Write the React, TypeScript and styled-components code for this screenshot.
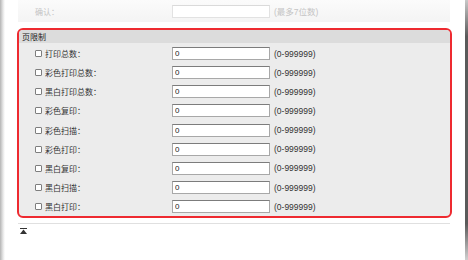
import styled, { createGlobalStyle } from 'styled-components';

const GlobalStyle = createGlobalStyle`
  html, body {
    margin: 0;
    padding: 0;
    background: #fff;
  }
  body {
    font-family: "Liberation Sans", "Noto Sans CJK SC", sans-serif;
    font-size: 8px;
    color: #333;
  }
`;

const rows = [
  '打印总数：',
  '彩色打印总数：',
  '黑白打印总数：',
  '彩色复印：',
  '彩色扫描：',
  '彩色打印：',
  '黑白复印：',
  '黑白扫描：',
  '黑白打印：',
];

function App() {
  return (
    <Frame>
      <GlobalStyle />
      <LeftShade />
      <Main>
        <TopPanel>
          <FieldLabel $muted>确认：</FieldLabel>
          <TextBox $muted readOnly value="" />
          <Hint $muted>(最多7位数)</Hint>
        </TopPanel>

        <LimitBox>
          <BoxHeader>页限制</BoxHeader>
          <RowList>
            {rows.map((label) => (
              <Row key={label}>
                <Check type="checkbox" />
                <RowLabel>{label}</RowLabel>
                <TextBox readOnly value="0" />
                <Hint>(0-999999)</Hint>
              </Row>
            ))}
          </RowList>
        </LimitBox>

        <Divider />
        <TopButton>
          <svg width="7" height="6" viewBox="0 0 7 6">
            <rect x="0" y="0" width="7" height="1" fill="#333" />
            <polygon points="3.5,1.5 7,6 0,6" fill="#333" />
          </svg>
        </TopButton>
      </Main>
      <RightShade />
    </Frame>
  );
}

const Frame = styled.div`
  display: flex;
  height: 260px;
  width: 468px;
  overflow: hidden;
`;

const LeftShade = styled.div`
  width: 5px;
  flex-shrink: 0;
  background: linear-gradient(to right, #b4b4b4, #e6e6e6 60%, #fff);
`;

const RightShade = styled.div`
  width: 3px;
  flex-shrink: 0;
  background: linear-gradient(to bottom, #c8c8c8, #5a5a5a 14%, #5a5a5a 86%, #d0d0d0);
`;

const Main = styled.div`
  flex: 1;
  display: flex;
  flex-direction: column;
  padding: 0 13px 0 12px;
`;

const TopPanel = styled.div`
  height: 22px;
  display: flex;
  align-items: center;
  margin: 0 2px 0 1px;
  padding-left: 17px;
  background: linear-gradient(to bottom, #fbfbfb, #f4f4f4);
`;

const FieldLabel = styled.span<{ $muted?: boolean }>`
  width: 137px;
  font-family: "Noto Sans CJK SC", sans-serif;
  color: ${({ $muted }) => ($muted ? '#c4c4c4' : '#333')};
`;

const TextBox = styled.input<{ $muted?: boolean }>`
  box-sizing: border-box;
  width: 98px;
  height: 13px;
  margin: 0;
  padding: 0 2px;
  font-family: "Liberation Sans", sans-serif;
  font-size: 8px;
  color: #222;
  background: #fff;
  border: 1px solid ${({ $muted }) => ($muted ? '#e2e2e2' : '#a8a8a8')};
  border-top-color: ${({ $muted }) => ($muted ? '#dadada' : '#7c7c7c')};
  outline: none;
`;

const Hint = styled.span<{ $muted?: boolean }>`
  margin-left: 4px;
  font-family: "Liberation Sans", "Noto Sans CJK SC", sans-serif;
  font-size: 8.5px;
  color: ${({ $muted }) => ($muted ? '#c4c4c4' : '#333')};
`;

const LimitBox = styled.div`
  margin-top: 6px;
  border: 2px solid #ee2a30;
  border-radius: 6px;
  background: #ececec;
  overflow: hidden;
`;

const BoxHeader = styled.div`
  height: 13px;
  line-height: 13px;
  padding-left: 3px;
  background: #dcdcdc;
  font-family: "Noto Sans CJK SC", sans-serif;
  color: #222;
`;

const RowList = styled.div`
  padding: 1px 0 0;
`;

const Row = styled.div`
  height: 19.15px;
  display: flex;
  align-items: center;
  padding-left: 16px;
`;

const Check = styled.input`
  appearance: none;
  box-sizing: border-box;
  width: 7px;
  height: 7px;
  margin: 0 3px 0 0;
  border: 1px solid #7e7e7e;
  border-radius: 1px;
  background: #fff;
`;

const RowLabel = styled.span`
  width: 127px;
  font-family: "Noto Sans CJK SC", sans-serif;
  color: #333;
`;

const Divider = styled.div`
  margin: 5px 2px 0 1px;
  border-top: 1px solid #e0e0e0;
`;

const TopButton = styled.div`
  display: flex;
  margin: 4px 0 0 3px;
`;

export default App;
